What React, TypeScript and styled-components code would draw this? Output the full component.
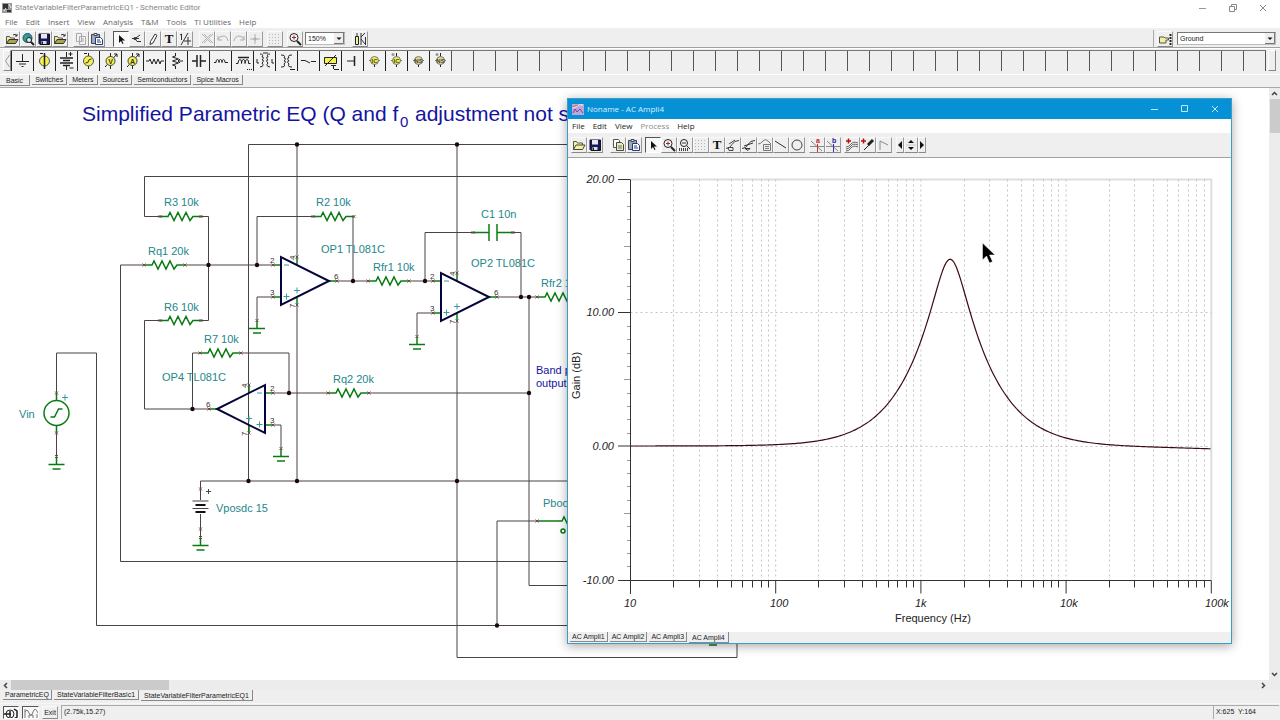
import React from "react";
import styled, { createGlobalStyle, css } from "styled-components";

const Global = createGlobalStyle`
  * { box-sizing: border-box; }
  body { margin: 0; background: #fff; font-family: "Open Sans", sans-serif; font-size: 8px; line-height: 12px; color: #222; }
  button, select { font: inherit; color: inherit; margin: 0; padding: 0; border: 0; background: none; }
  svg { display: block; flex: none; }
`;

const SMALL = `"Liberation Sans", Arial, sans-serif`;

/* ---------- shell ---------- */

const Shell = styled.div`
  display: flex;
  flex-direction: column;
  min-height: 100vh;
  background: #efefef;
`;

const TitleBar = styled.header`
  display: flex;
  align-items: center;
  height: 16px;
  padding: 0 10px 1px 2px;
  gap: 3px;
  background: #fff;
  color: #858585;
`;

const TitleText = styled.h1`
  flex: 1;
  margin: 0;
  font: 400 8px/12px Roboto, sans-serif;
  white-space: nowrap;
`;

const WindowButtons = styled.div<{ $gap: number }>`
  display: flex;
  gap: ${(p) => p.$gap}px;
`;

const WindowButton = styled.button`
  display: grid;
  place-items: center;
  width: 14px;
  height: 14px;
`;

const MenuBar = styled.nav<{ $window?: boolean }>`
  display: flex;
  align-items: center;
  height: ${(p) => (p.$window ? 14 : 12)}px;
  gap: 8px;
  padding: ${(p) => (p.$window ? "0 4px" : "0 5px")};
  background: #fff;
  color: ${(p) => (p.$window ? "#222" : "#666")};
`;

const MenuItem = styled.button`
  line-height: 12px;
  &:disabled { color: #8c8c8c; }
`;

const ToolBar = styled.div<{ $window?: boolean }>`
  display: flex;
  align-items: center;
  height: ${(p) => (p.$window ? 25 : 20)}px;
  padding: ${(p) => (p.$window ? "0 3px" : "2px 4px 0")};
  background: #efefef;
  border-bottom: 1px solid #a2a2a2;
`;

const Group = styled.div<{ $before?: number }>`
  display: flex;
  margin-left: ${(p) => p.$before ?? 0}px;
`;

const ToolButton = styled.button<{ $pressed?: boolean; $width?: number }>`
  display: grid;
  place-items: center;
  width: ${(p) => p.$width ?? 16}px;
  height: 16px;
  overflow: hidden;
  border: 1px solid;
  border-color: ${(p) => (p.$pressed ? "#555 #fff #fff #555" : "#fafafa #999 #888 #fafafa")};
  background: ${(p) => (p.$pressed ? "#f8f8f8" : "#efefef")};
`;

const Spacer = styled.div`flex: 1;`;

const Divider = styled.div`
  width: 1px;
  height: 18px;
  background: #aaa;
  margin-right: 3px;
`;

const Combo = styled.div<{ $width: number; $before: number }>`
  position: relative;
  width: ${(p) => p.$width}px;
  margin-left: ${(p) => p.$before}px;
  select {
    appearance: none;
    display: block;
    width: 100%;
    height: 13px;
    padding-left: 2px;
    border: 1px solid;
    border-color: #777 #bbb #bbb #777;
    background: #fff;
    font: 7px/11px ${SMALL};
  }
  svg {
    position: absolute;
    right: 1px;
    top: 1px;
    pointer-events: none;
  }
`;

/* ---------- component palette ---------- */

const Palette = styled.div`
  display: flex;
  height: 27px;
  padding: 1px 4px 3px 3px;
  border-top: 1px solid #fff;
  border-bottom: 1px solid #fff;
`;

const PaletteScroll = styled.button<{ $right?: boolean }>`
  display: grid;
  place-items: center;
  width: 8px;
  height: 21px;
  margin-left: ${(p) => (p.$right ? 2 : 0)}px;
  border: 1px solid;
  border-color: #fff #888 #888 #fff;
`;

const PaletteCells = styled.div`
  flex: 1;
  display: flex;
  height: 21px;
  min-width: 0;
  overflow: hidden;
  border-top: 1px solid #777;
  background: repeating-linear-gradient(to right, #555 0 1px, #efefef 1px 22px);
`;

const PaletteCell = styled.button`
  display: grid;
  place-items: center;
  flex: none;
  width: 22px;
  height: 20px;
  border-left: 1px solid #222;
  background: #f2f2f2;
`;

/* ---------- tabs ---------- */

const Tabs = styled.div<{ $height: number; $line?: boolean; $pad: number }>`
  display: flex;
  align-items: flex-start;
  gap: 2px;
  height: ${(p) => p.$height}px;
  padding-left: ${(p) => p.$pad}px;
  background: #efefef;
  border-bottom: ${(p) => (p.$line ? "1px solid #aaa" : "0")};
`;

const Tab = styled.button<{ $active?: boolean; $pad?: number }>`
  height: ${(p) => (p.$active ? 11 : 10)}px;
  padding: ${(p) => (p.$active ? 1 : 0)}px ${(p) => p.$pad ?? 2}px 0;
  border: solid #888;
  border-width: 0 1px 1px 0;
  font: 7px/9px ${SMALL};
  color: #222;
  white-space: nowrap;
`;

/* ---------- work area ---------- */

const Work = styled.div`
  flex: 1;
  display: flex;
  min-height: 592px;
`;

const Canvas = styled.main`
  position: relative;
  flex: 1;
  min-width: 0;
  overflow: hidden;
  background: #fff;
`;

const Scroll = styled.div<{ $vertical?: boolean }>`
  display: flex;
  flex-direction: ${(p) => (p.$vertical ? "column" : "row")};
  align-items: center;
  flex: none;
  background: #ececec;
  ${(p) =>
    p.$vertical
      ? css`width: 11px;`
      : css`height: 10px; padding-right: 11px;`}
`;

const ScrollButton = styled.button`
  display: grid;
  place-items: center;
  width: 11px;
  height: 11px;
`;

const Thumb = styled.div<{ $vertical?: boolean }>`
  background: #cbcbcb;
  width: ${(p) => (p.$vertical ? 10 : 158)}px;
  height: ${(p) => (p.$vertical ? 34 : 10)}px;
`;

const StatusBar = styled.footer`
  display: flex;
  align-items: center;
  height: 17px;
  padding: 0 1px 0 3px;
  font: 7px/12px ${SMALL};
  border-top: 1px solid #f6f6f6;
`;

const StatusButton = styled(ToolButton)`
  height: 13px;
  margin-right: 3px;
`;

const StatusCell = styled.div<{ $grow?: boolean }>`
  flex: ${(p) => (p.$grow ? "1" : "none")};
  width: ${(p) => (p.$grow ? "auto" : "66px")};
  height: 14px;
  padding-left: 2px;
  white-space: pre;
  border: solid #aaa;
  border-width: 1px 0 0 1px;
`;

/* ---------- analysis window ---------- */

const ChartWindow = styled.section`
  position: absolute;
  left: 567px;
  top: 10px;
  width: 665px;
  border: 1px solid #3b9cc4;
  background: #fff;
  box-shadow: 0 2px 10px rgba(0, 0, 0, 0.35);
`;

const ChartTitle = styled.div`
  display: flex;
  align-items: center;
  gap: 3px;
  height: 20px;
  padding: 0 9px 0 4px;
  background: #0690d6;
  color: #d5f2ff;
  h2 { flex: 1; margin: 0; font-size: 8px; font-weight: 400; }
`;

/* ---------- icons, drawn on a 14px grid ---------- */

const Icon = ({ children, w = 14, h = 14 }: { children: React.ReactNode; w?: number; h?: number }) => (
  <svg width={w} height={h} viewBox={`0 0 ${w} ${h}`} fill="none" stroke="#222" strokeWidth="1" aria-hidden="true">
    {children}
  </svg>
);

const Glyph = styled.text<{ $size: number; $serif?: boolean }>`
  font: 700 ${(p) => p.$size}px ${(p) => (p.$serif ? `"Liberation Serif", serif` : SMALL)};
  stroke: none;
`;

const icons: Record<string, React.ReactNode> = {
  open: (<Icon><path d="M1.5 11.5v-7h3l1 1.5h4v2" stroke="#555" fill="#f0ec90" /><path d="M1.5 11.5l2.5-4h9l-2.5 4z" fill="#a9a648" stroke="#333" /><path d="M8 3q2-2 4 1M12 2v2h-2" stroke="#333" /></Icon>),
  openLight: (<Icon><path d="M1.5 11.5v-8h3l1 1.5h5v2" stroke="#555" fill="#f5f29a" /><path d="M1.5 11.5l2.5-4.5h9l-2.5 4.5z" fill="#f5f29a" stroke="#444" /></Icon>),
  globe: (<Icon><circle cx="6.5" cy="6" r="4.5" fill="#2b8fb8" stroke="#17566e" /><path d="M3 4q2-2 3 0t2 1-1 3-3-1z" fill="#42a55a" stroke="none" /><path d="M9 9l4 4" strokeWidth="2" /><circle cx="8" cy="8" r="2.5" fill="#d6f1f5" /></Icon>),
  save: (<Icon><path d="M2 2h10.500v10.500H3L2 11.500z" fill="#18185e" stroke="#111" /><path d="M4 2h6v4.500H4z" fill="#e8e8f4" stroke="none" /><path d="M4.500 9h5v3h-5z" fill="#ddd" stroke="none" /><path d="M5.500 9.500v2.500" /></Icon>),
  copyOff: (<Icon><path d="M2.500 1.500h5v8h-5zM5.500 4.500h6v8h-6z" fill="#f3f3f3" stroke="#aaa" /><path d="M7 7h3M7 9h3" stroke="#aaa" /></Icon>),
  copy: (<Icon><path d="M2.500 1.500h5l1 1v7h-6z" fill="#fff" stroke="#555" /><path d="M5.500 4.500h5l2 2v6h-7z" fill="#e9efb5" stroke="#444" /><path d="M7 8h4M7 10h4" stroke="#667" /></Icon>),
  paste: (<Icon><path d="M1.500 2.500h8v9h-8z" fill="#9ab" stroke="#445" /><path d="M4 1.500h3v2H4z" fill="#eee" stroke="#445" /><path d="M5.500 5.500h5l2 2v5h-7z" fill="#fff" stroke="#223a7c" /><path d="M7 8h3M7 10h4" stroke="#223a7c" /></Icon>),
  pointer: (<Icon><path d="M5 3v8l2-2 1.500 3 1-.5L8 8.500h3z" fill="#111" stroke="none" /></Icon>),
  wire: (<Icon><path d="M10 3L5 6.500M5 6.500H2M5 6.500l2 3h4M5 6.500h4" stroke="#333" /><circle cx="5" cy="6.500" r="1.500" fill="#333" stroke="none" /></Icon>),
  pencil: (<Icon><path d="M9 2l2 1.500-4 7.500-3 1.500.5-3z" fill="#fff" stroke="#333" /></Icon>),
  text: (<Icon><Glyph $size={13} $serif x="7" y="11" textAnchor="middle" fill="#111">T</Glyph></Icon>),
  half: (<Icon><path d="M2 3l1.500-1v6M10 1L3 13M10 5v4M6 9h7M10 9v4" stroke="#333" /></Icon>),
  cross: (<Icon><path d="M2 2l9 9M4 2l9 9M11 2l-9 9M13 2l-9 9" stroke="#b5b5b5" /></Icon>),
  undo: (<Icon><path d="M2 8q1-4 5-4t5 5M2 4v4h4" stroke="#b0b0b0" /></Icon>),
  redo: (<Icon><path d="M12 8q-1-4-5-4t-5 5M12 4v4H8" stroke="#b0b0b0" /></Icon>),
  plus: (<Icon><path d="M7 2v10M2 7h10" stroke="#b0b0b0" /><path d="M5 7l2-2 2 2-2 2z" fill="#b0b0b0" stroke="none" /></Icon>),
  grid: (<Icon><path d="M1 2.500h12M1 5.500h12M1 8.500h12M1 11.500h12" stroke="#b8b8b8" strokeDasharray="1 2" /></Icon>),
  zoom: (<Icon><circle cx="6" cy="5.500" r="4" fill="#f6f6f6" /><path d="M9 9l4 4" strokeWidth="2" /><path d="M4 5.500h4M6 3.500v4" stroke="#a22" /></Icon>),
  zoom100: (<Icon><circle cx="6" cy="5" r="3.500" fill="#f6f6f6" /><path d="M4 5h4M9 8l3 3" stroke="#333" /><path d="M1 11.500h10" stroke="#444" strokeWidth="3" strokeDasharray="1 1" /></Icon>),
  probe: (<Icon><path d="M2.500 4.500h3v8h-3z" fill="#f3f0a0" /><path d="M4 1v3M8 1v12M8 5l4-4M8 7l4 5M12.500 5v8" stroke="#333" /></Icon>),
  hand: (<Icon><path d="M1.500 5h4l2 1h3v2H8v3H1.500z" fill="#eef0a8" stroke="#554" /><path d="M12.500 2v11" strokeDasharray="2 1" strokeWidth="2" /></Icon>),
  curveA: (<Icon><path d="M0 10.500q4 0 6-4t7-4M3 6l6-4M2 9.500h5v3H3z" stroke="#444" /></Icon>),
  curveB: (<Icon><path d="M0 10.500q4 0 6-4t7-4M2 8l9-3M3 10.500h5l-2 2z" stroke="#333" /></Icon>),
  legend: (<Icon><path d="M0 6q3 0 5-3t5 0l3 3M5.500 6.500h7v6h-7zM7 8.500h4M7 10.500h4" stroke="#777" /></Icon>),
  line: (<Icon><path d="M1 3l11 7" stroke="#333" /></Icon>),
  circle: (<Icon><circle cx="7" cy="7" r="5" stroke="#444" /></Icon>),
  cursorA: (<Icon><path d="M0 8.500h14M1 3l11 10" stroke="#888" /><path d="M7.500 6v8" stroke="#c33" /><Glyph $size={7} x="6" y="5" fill="#c22">a</Glyph></Icon>),
  cursorB: (<Icon><path d="M0 8.500h14M1 3l11 10" stroke="#888" /><path d="M7.500 6v8" stroke="#33a" /><Glyph $size={7} x="6" y="5" fill="#22a">b</Glyph></Icon>),
  addCurve: (<Icon><path d="M1 9q3 0 5-3t7-1M1 11q3 0 5-3t7-1M1 13q3 0 5-3t7-1" stroke="#666" /><path d="M1 3h5M3.500 .5v5" stroke="#b11" strokeWidth="1.500" /></Icon>),
  addProbe: (<Icon><path d="M3 12l5-5" stroke="#222" /><path d="M7 7l5-5" stroke="#222" strokeWidth="3" /><path d="M0 3h5M2.500 .5v5" stroke="#b11" strokeWidth="1.500" /></Icon>),
  angle: (<Icon><path d="M3 12V3l8 4" stroke="#888" /></Icon>),
  left: (<Icon w={6} h={10}><path d="M5 1v8L1 5z" fill="#111" stroke="none" /></Icon>),
  right: (<Icon w={6} h={10}><path d="M1 1v8l4-4z" fill="#111" stroke="none" /></Icon>),
  updown: (<Icon w={10} h={14}><path d="M2 5l3-3 3 3zM2 9l3 3 3-3z" fill="#111" stroke="none" /><path d="M0 7h10" stroke="#ccc" /></Icon>),
};

const YELLOW = "#f5f14c";

const Bulb = ({ label, star, pale }: { label: string; star?: boolean; pale?: boolean }) => (
  <>
    <path d={star ? "M9.500 2v14" : "M9.500 10v6"} />
    <circle cx="9.500" cy="9.500" r="4" fill={pale ? "#dcd98a" : "#eff04a"} stroke="#777" />
    <path d="M4 9.500h2M13 9.500h2" stroke="#777" />
    <Glyph $size={6} x="9.500" y="12" textAnchor="middle" fill="#444">{label}</Glyph>
    {star && <circle cx="6" cy="3.500" r="1.500" fill="#999" stroke="none" />}
  </>
);

const Meter = ({ label }: { label: string }) => (
  <>
    <path d="M9.500 2v16M4 16L16 3M13 3h3v3" />
    <circle cx="9.500" cy="10" r="4.500" fill={YELLOW} stroke="#444" />
    <Glyph $size={7} x="9.500" y="12.500" textAnchor="middle" fill="#333">{label}</Glyph>
  </>
);

const parts: [string, React.ReactNode][] = [
  ["Ground", <path d="M9.500 3v7M3 10.500h13M6 13h7M8.500 15.500h2" />],
  ["Voltage source", <><circle cx="9.500" cy="10" r="5" fill={YELLOW} stroke="#555" /><path d="M9.500 2v16" strokeWidth="1.500" /><path d="M5 2.500h3" /></>],
  ["Battery", <><path d="M9.500 1v5M9.500 15v4M13.500 1v4M11.500 3h4M12.500 17h4" /><path d="M3 7h13M6 9.500h7M3 12h13M6 14.500h7" strokeWidth="1.500" /></>],
  ["Generator", <><path d="M9.500 2v16M5 2.500h3" /><circle cx="9.500" cy="10" r="5" fill={YELLOW} stroke="#555" /><path d="M6.500 12q3 0 3-2t3-2" /></>],
  ["Voltmeter", <Meter label="V" />],
  ["Ammeter", <Meter label="A" />],
  ["Resistor", <path d="M1 10h3l1-2 2 5 2-5 2 5 2-5 2 5 1-3h3" />],
  ["Potentiometer", <path d="M8.500 2v3l-3 1 6 2-6 2 6 2-6 2 3 1v3M16 10h-5M13 8l-2 2 2 2" />],
  ["Capacitor", <path d="M3 10h5M12 10h5M8 4v12M11.500 4v12" strokeWidth="1.500" />],
  ["Inductor", <path d="M3 11.500h2q0-3 1.500-3t1.500 3q0-3 1.500-3t1.500 3q0-3 1.500-3t1.500 3h3" />],
  ["Core inductor", <><path d="M3 12.500h2q0-4 2-4t1.500 4q0-4 2-4t1.500 4q0-4 2-4t1.500 4h2" /><path d="M5 6.500h11" strokeWidth="1.500" /><path d="M14 18.500h5" strokeDasharray="1 1" /></>],
  ["Coupled inductors", <path d="M5 3q4 0 2 3 3 0 0 3 3 0 0 3 3 3-2 4M15 3q-4 0-2 3-3 0 0 3-3 0 0 3-3 3 2 4M2 8v4h2M17 8v4h2M8 2h5" />],
  ["Transformer", <path d="M4 4q5 0 3 3 3 0 0 3 3 0 0 3 2 3-3 3M15 4q-5 0-3 3-3 0 0 3-3 0 0 3-2 3 3 3M13 18.500h5" />],
  ["Switch", <path d="M2 9.500h4l5 2.500M12 10.500h5" />],
  ["Relay", <><path d="M3.500 6.500h12v6h-12z" fill={YELLOW} /><path d="M4 15L15 4M12.500 14v4M10 14.500h5M13 18.500h5" /></>],
  ["Terminal", <><path d="M4 10h7" /><path d="M11.500 5v10" strokeWidth="1.500" /></>],
  ["Initial condition", <Bulb label="IC" />],
  ["Initial condition, differential", <Bulb label="IC" star />],
  ["Nodeset", <Bulb label="NS" pale />],
  ["Nodeset, differential", <Bulb label="NS" star pale />],
];

const Arrow = ({ d }: { d: string }) => (
  <svg width="7" height="7" viewBox="0 0 7 7" fill="none" stroke="#444" strokeWidth="1.500" aria-hidden="true"><path d={d} /></svg>
);

const Select = ({ label, options, width, before }: { label: string; options: string[]; width: number; before: number }) => (
  <Combo $width={width} $before={before}>
    <select aria-label={label}>{options.map((o) => <option key={o}>{o}</option>)}</select>
    <svg width="10" height="11" viewBox="0 0 10 11" aria-hidden="true">
      <path d="M0 0h10v11H0z" fill="#eee" />
      <path d="M9.500 0v10.500H0" fill="none" stroke="#777" />
      <path d="M2.500 4.500h5L5 7z" fill="#111" />
    </svg>
  </Combo>
);

const Buttons = ({ names, before, pressed }: { names: [string, string][]; before?: number; pressed?: string }) => (
  <Group $before={before}>
    {names.map(([icon, label]) => (
      <ToolButton key={label} aria-label={label} $pressed={icon === pressed}>{icons[icon]}</ToolButton>
    ))}
  </Group>
);

/* ---------- schematic ---------- */

const SchematicSvg = styled.svg`
  font-family: ${SMALL};
  font-size: 11px;
  .wire { stroke: #4a4245; stroke-width: 1; fill: none; }
  .part { stroke: #0b7a14; stroke-width: 1.5; fill: none; }
  .amp { stroke: #04043c; stroke-width: 2; fill: none; }
  .sign { stroke: #3a9a9a; stroke-width: 1; fill: none; }
  .name { fill: #24878a; }
  .note { fill: #1414a0; }
  .heading { font-size: 21px; }
  .sub { font-size: 15px; }
  .pin { fill: #333; font-size: 8px; }
  .end { stroke: #7a4a40; stroke-width: 1; fill: none; }
`;

const End = ({ x, y }: { x: number; y: number }) => (
  <path className="end" d={`M${x - 1.5} ${y - 1.5}l3 3m0 -3l-3 3`} />
);

const Resistor = ({ x, y }: { x: number; y: number }) => (
  <g>
    <path className="part" d={`M${x} ${y}h8l2 -4 4 8 4 -8 4 8 4 -8 4 8 3 -4h8`} />
    <End x={x} y={y} />
    <End x={x + 41} y={y} />
  </g>
);

const Ground = ({ x, y }: { x: number; y: number }) => (
  <g>
    <path className="part" d={`M${x} ${y - 8}v8M${x - 8} ${y}h16M${x - 4} ${y + 4.5}h8`} />
    <End x={x} y={y - 8} />
  </g>
);

const OpAmp = ({ x, y, flip }: { x: number; y: number; flip?: boolean }) => {
  const s = flip ? -1 : 1;
  const px = x + 16 * s;
  return (
    <g>
      <path className="part" d={`M${x} ${y - 16}h${-8 * s}M${x} ${y + 16}h${-8 * s}M${x + 48 * s} ${y}h${8 * s}M${px} ${y - 16}v-8M${px} ${y + 16}v8`} />
      <path className="amp" d={`M${x} ${y - 24}v48l${48 * s} -24z`} />
      <path className="sign" d={`M${x + 3 * s} ${y - 16}h${5 * s}M${x + 2.5 * s} ${y + 15.5}h${6 * s}M${x + 5.5 * s} ${y + 12.5}v6M${px - 3} ${y + 9.5}h6M${px} ${y + 6.5}v6`} />
      <End x={x - 8 * s} y={y - 16} />
      <End x={x - 8 * s} y={y + 16} />
      <End x={x + 56 * s} y={y} />
      <End x={px} y={y - 24} />
      <End x={px} y={y + 24} />
      <text className="pin" x={flip ? x + 5 : x - 11} y={y - 18}>2</text>
      <text className="pin" x={flip ? x + 5 : x - 11} y={y + 14}>3</text>
      <text className="pin" x={flip ? x - 59 : x + 53} y={y - 2}>6</text>
      <text className="pin" transform={`translate(${px - 2} ${y - 21}) rotate(-90)`}>4</text>
      <text className="pin" transform={`translate(${px - 2} ${y + 27}) rotate(-90)`}>7</text>
    </g>
  );
};

const wires = [
  "M248.500 481V144.500H740",
  "M160 216.500H144.500V176.500H740",
  "M201 216.500H208.500V320.500H201",
  "M144 265H120.500V561.500H740",
  "M185 265H272",
  "M160 320.500H144.500V409H208",
  "M313 216.500H257V265M353 216.500V281",
  "M297 144V257M297 305V481",
  "M457 144V273M457 321V657.500H737V640",
  "M337 281H369M409 281H432",
  "M272 297H257V320M432 313H417V336",
  "M473 232.500H425V281M513 232.500H521V297",
  "M497 297H537M529 297V585.500H740",
  "M200 353H192.500V409M241 353H289V393",
  "M273 393H329M369 393H529",
  "M273 425H281V448",
  "M56.500 393V353H96.500V625.500H740",
  "M56.500 433V457",
  "M740 481H200.500V500M200.500 514V537",
  "M537 521H497V626",
];

const nodes = [
  [208.5, 265], [257, 265], [297, 144.5], [457, 144.5], [353, 281], [425, 281], [521, 297], [529, 297],
  [529, 393], [457, 481], [297, 481], [248.5, 481], [192.5, 409], [289, 393], [497, 625.5],
];

const names: [number, number, string][] = [
  [164, 206, "R3 10k"], [148, 255, "Rq1 20k"], [164, 311, "R6 10k"], [316, 206, "R2 10k"],
  [321, 253, "OP1 TL081C"], [373, 271, "Rfr1 10k"], [481, 218, "C1 10n"], [471, 267, "OP2 TL081C"],
  [541, 287, "Rfr2 1"], [204, 343, "R7 10k"], [162, 381, "OP4 TL081C"], [333, 383, "Rq2 20k"],
  [19, 418, "Vin"], [216, 512, "Vposdc 15"], [543, 507, "Pboo"],
];

const Schematic = () => (
  <SchematicSvg width="740" height="592" viewBox="0 88 740 592" role="img" aria-label="Parametric EQ schematic">
    <text className="note heading" x="82" y="121">Simplified Parametric EQ (Q and f</text>
    <text className="note sub" x="400" y="127">0</text>
    <text className="note heading" x="415" y="121">adjustment not s</text>
    {wires.map((d) => <path key={d} className="wire" d={d} />)}
    {[[160, 216.5], [144, 265], [160, 320.5], [313, 216.5], [368, 281], [537, 297], [200, 353], [328, 393]].map(([x, y]) => (
      <Resistor key={`${x}-${y}`} x={x} y={y} />
    ))}
    {[[257, 328.5], [417, 344.5], [281, 456.5], [56.5, 464.5], [200.5, 545.5], [713, 640.5]].map(([x, y]) => (
      <Ground key={`${x}-${y}`} x={x} y={y} />
    ))}
    <OpAmp x={281} y={281} />
    <OpAmp x={441} y={297} />
    <OpAmp x={265} y={409} flip />
    <path className="part" d="M473 232.500H489M489 224V241M497 224V241M497 232.500H513" />
    <End x={473} y={232.5} />
    <End x={513} y={232.5} />
    <path className="part" d="M537 521H562l2 -4 4 8M56.500 393V401M56.500 425V433M50.500 417h4l4 -8h4" />
    <circle className="part" cx="56.500" cy="413" r="12.500" />
    <circle className="part" cx="563" cy="531" r="2" />
    <End x={537} y={521} />
    <End x={56.5} y={393} />
    <End x={56.5} y={433} />
    <End x={200.5} y={489} />
    <End x={200.5} y={529} />
    <path className="sign" d="M62 397.500h6M65 394.500v6" />
    <path className="wire" d="M192.500 501h16M192.500 508.500h16M206 491.500h5M208.500 489v5" />
    <path d="M195.500 505h10M195.500 512h10" stroke="#111" strokeWidth="2" />
    {nodes.map(([x, y]) => <circle key={`${x}-${y}`} cx={x} cy={y} r="2.200" fill="#1c080c" />)}
    {names.map(([x, y, t]) => <text key={t} className="name" x={x} y={y}>{t}</text>)}
    <text className="note" x="536" y="374">Band p</text>
    <text className="note" x="536" y="387">output</text>
  </SchematicSvg>
);

/* ---------- gain plot ---------- */

const X0 = 630.5;
const DECADE = 145.2;
const ZERO = 446;
const PER_DB = 13.36;
const BOTTOM = 580.5;
const TOP = 179.5;
const RIGHT = X0 + 4 * DECADE;

const gainDb = (f: number) => {
  const u = f / 1590 - 1590 / f;
  const width = 0.25;
  const boost = 25.1;
  return 10 * Math.log10((u * u + width * boost) / (u * u + width)) - 0.22 * Math.pow(f / 100000, 0.7);
};

const curve = Array.from({ length: 291 }, (_, i) => {
  const x = X0 + i * 2;
  const f = 10 * Math.pow(10, (i * 2) / DECADE);
  return `${i ? "L" : "M"}${x} ${(ZERO - gainDb(f) * PER_DB).toFixed(2)}`;
}).join("");

const minorX = [0, 1, 2, 3].flatMap((d) =>
  [2, 3, 4, 5, 6, 7, 8, 9].map((m) => Math.round(X0 + DECADE * (d + Math.log10(m))) - 0.5),
);
const majorX = [0, 1, 2, 3, 4].map((d) => X0 + DECADE * d);

const minorY = Array.from({ length: 29 }, (_, i) => i + 1)
  .filter((i) => i % 10 !== 0)
  .map((i) => {
    const length = i % 5 === 0 ? 6 : 3;
    return `M${630 - length} ${Math.floor(TOP + i * PER_DB) + 0.5}h${length}`;
  })
  .join("");

const PlotSvg = styled.svg`
  font-family: ${SMALL};
  font-size: 11px;
  fill: #222;
  .axis { stroke: #333; fill: none; }
  .fine { stroke: #999; fill: none; }
  .frame { stroke: #dedede; stroke-width: 2; fill: none; }
  .grid { stroke: #c4c4c4; stroke-dasharray: 2 3; fill: none; }
  .scale { font-style: italic; }
`;

const Plot = () => (
  <PlotSvg width="663" height="474" viewBox="568 158 663 474" role="img" aria-label="Gain against frequency">
    <path className="frame" d={`M${X0} ${TOP}H${RIGHT}V${BOTTOM}`} />
    <path className="grid" d={[...minorX, ...majorX.slice(1, 4)].map((x) => `M${x} ${TOP}V${BOTTOM}`).join("") + `M${X0} 312.500H${RIGHT}M${X0} 446.500H${RIGHT}`} />
    <path className="fine" d={minorY} />
    <path className="axis" d={`M${X0} ${TOP}V594M618 ${BOTTOM}H${RIGHT}M618 179.500h12M618 312.500h12M618 446h12`} />
    <path className="axis" d={minorX.map((x) => `M${x} ${BOTTOM}v7`).join("") + majorX.map((x) => `M${x} ${BOTTOM}v13`).join("")} />
    <path d={curve} fill="none" stroke="#3a0d12" strokeWidth="1.200" />
    <g className="scale" textAnchor="end">
      <text x="614" y="183">20.00</text>
      <text x="614" y="316">10.00</text>
      <text x="614" y="450">0.00</text>
      <text x="614" y="584">-10.00</text>
    </g>
    <g className="scale">
      <text x="624" y="607">10</text>
      <text x="770" y="607">100</text>
      <text x="915" y="607">1k</text>
      <text x="1060" y="607">10k</text>
      <text x="1205" y="607">100k</text>
    </g>
    <text x="895" y="622">Frequency (Hz)</text>
    <text transform="translate(580 399) rotate(-90)">Gain (dB)</text>
    <path d="M982.500 243v17l4-4 3 7 3-1.500-3-6.500h5.500z" fill="#000" stroke="#fff" strokeWidth="0.500" />
  </PlotSvg>
);

/* ---------- page ---------- */

export default function App() {
  return (
    <Shell>
      <Global />
      <TitleBar>
        <svg width="10" height="12" viewBox="0 0 10 12" aria-hidden="true">
          <path d="M0 1h10v10H0z" fill="#999" />
          <path d="M1 2h5v5H1zM5 8h4v2H5z" fill="#333" />
          <path d="M7 2l2 4M2 9l2-3" stroke="#eee" />
        </svg>
        <TitleText>StateVariableFilterParametricEQ1 - Schematic Editor</TitleText>
        <WindowButtons $gap={16}>
          <WindowButton aria-label="Minimize"><svg width="8" height="8" viewBox="0 0 8 8"><path d="M0 4.500h7" stroke="#999" /></svg></WindowButton>
          <WindowButton aria-label="Restore"><svg width="8" height="8" viewBox="0 0 8 8" fill="none" stroke="#888"><path d="M.5 2.500h5v5h-5zM2.500 2V.5h5v5H6" /></svg></WindowButton>
          <WindowButton aria-label="Close"><svg width="8" height="8" viewBox="0 0 8 8" stroke="#888"><path d="M1 1l6 6M7 1L1 7" /></svg></WindowButton>
        </WindowButtons>
      </TitleBar>
      <MenuBar>
        {["File", "Edit", "Insert", "View", "Analysis", "T&M", "Tools", "TI Utilities", "Help"].map((m) => <MenuItem key={m}>{m}</MenuItem>)}
      </MenuBar>
      <ToolBar>
        <Buttons names={[["open", "Open"], ["globe", "Open from web"], ["save", "Save"], ["open", "Close file"]]} />
        <Buttons before={5} names={[["copyOff", "Copy"], ["paste", "Paste"]]} />
        <Buttons before={8} pressed="pointer" names={[["pointer", "Select"], ["wire", "Last component"], ["pencil", "Wire"], ["text", "Text"], ["half", "Hide values"]]} />
        <Buttons before={6} names={[["cross", "Delete"], ["undo", "Undo"], ["redo", "Redo"], ["plus", "Mirror"]]} />
        <Buttons before={4} names={[["grid", "Grid"]]} />
        <Buttons before={4} names={[["zoom", "Zoom"]]} />
        <Select label="Zoom level" options={["150%", "100%", "200%"]} width={40} before={2} />
        <Buttons before={7} names={[["probe", "Interactive mode"]]} />
        <Spacer />
        <Divider />
        <Buttons names={[["hand", "Find component"]]} />
        <Select label="Component" options={["Ground", "Resistor", "Capacitor"]} width={99} before={4} />
      </ToolBar>
      <Palette>
        <PaletteScroll aria-label="Scroll left"><svg width="5" height="12" viewBox="0 0 5 12"><path d="M4.500 0L.5 6l4 6" fill="none" stroke="#999" /></svg></PaletteScroll>
        <PaletteCells>
          {parts.map(([label, art]) => (
            <PaletteCell key={label} aria-label={label}><Icon w={20} h={20}>{art}</Icon></PaletteCell>
          ))}
        </PaletteCells>
        <PaletteScroll aria-label="Scroll right" $right />
      </Palette>
      <Tabs $height={13} $line $pad={0}>
        <Tab $active $pad={6}>Basic</Tab>
        {["Switches", "Meters", "Sources", "Semiconductors", "Spice Macros"].map((t) => <Tab key={t} $pad={3}>{t}</Tab>)}
      </Tabs>
      <Work>
        <Canvas>
          <Schematic />
          <ChartWindow>
            <ChartTitle>
              <svg width="12" height="12" viewBox="0 0 12 12" aria-hidden="true">
                <path d="M0 1h12v11H0z" fill="#b9a9d6" />
                <path d="M0 5q3 0 5-2t6-1" stroke="#eee" fill="none" />
                <path d="M1 10l2-4 2 3 3-3 3 4" stroke="#8a3aa8" fill="none" />
                <path d="M0 4l6-2" stroke="#d66" />
              </svg>
              <h2>Noname - AC Ampli4</h2>
              <WindowButtons $gap={16}>
                <WindowButton aria-label="Minimize chart"><svg width="8" height="8" viewBox="0 0 8 8"><path d="M0 4.500h7" stroke="#bdeaff" /></svg></WindowButton>
                <WindowButton aria-label="Maximize chart"><svg width="8" height="8" viewBox="0 0 8 8"><path d="M.5 .5h6v6h-6z" fill="none" stroke="#bdeaff" /></svg></WindowButton>
                <WindowButton aria-label="Close chart"><svg width="8" height="8" viewBox="0 0 8 8"><path d="M1 1l6 6M7 1L1 7" stroke="#bdeaff" /></svg></WindowButton>
              </WindowButtons>
            </ChartTitle>
            <MenuBar $window>
              <MenuItem>File</MenuItem>
              <MenuItem>Edit</MenuItem>
              <MenuItem>View</MenuItem>
              <MenuItem disabled>Process</MenuItem>
              <MenuItem>Help</MenuItem>
            </MenuBar>
            <ToolBar $window>
              <Buttons names={[["openLight", "Open curve"], ["save", "Save curve"]]} />
              <Buttons before={7} names={[["copy", "Copy curve"], ["paste", "Paste curve"]]} />
              <Buttons before={3} pressed="pointer" names={[["pointer", "Pointer"], ["zoom", "Zoom in"], ["zoom100", "Zoom 100%"], ["grid", "Show grid"], ["text", "Add text"], ["curveA", "Arrow"], ["curveB", "Auto label"], ["legend", "Legend"], ["line", "Line"], ["circle", "Ellipse"]]} />
              <Buttons before={4} names={[["cursorA", "Cursor a"], ["cursorB", "Cursor b"]]} />
              <Buttons before={3} names={[["addCurve", "Add more curves"], ["addProbe", "Post-processor"], ["angle", "Axis"]]} />
              <Group $before={4}>
                <ToolButton $width={8} aria-label="Previous page">{icons.left}</ToolButton>
                <ToolButton $width={14} aria-label="Change page">{icons.updown}</ToolButton>
                <ToolButton $width={8} aria-label="Next page">{icons.right}</ToolButton>
              </Group>
            </ToolBar>
            <Plot />
            <Tabs $height={11} $pad={2}>
              <Tab>AC Ampli1</Tab>
              <Tab>AC Ampli2</Tab>
              <Tab>AC Ampli3</Tab>
              <Tab $active $pad={3}>AC Ampli4</Tab>
            </Tabs>
          </ChartWindow>
        </Canvas>
        <Scroll $vertical>
          <ScrollButton aria-label="Scroll up"><Arrow d="M1 5l2.500-2.500L6 5" /></ScrollButton>
          <Thumb $vertical />
          <Spacer />
          <ScrollButton aria-label="Scroll down"><Arrow d="M1 2l2.500 2.500L6 2" /></ScrollButton>
        </Scroll>
      </Work>
      <Scroll>
        <ScrollButton aria-label="Scroll sheet left"><Arrow d="M5 1L2.500 3.500 5 6" /></ScrollButton>
        <Thumb />
        <Spacer />
        <ScrollButton aria-label="Scroll sheet right"><Arrow d="M2 1l2.500 2.500L2 6" /></ScrollButton>
      </Scroll>
      <Tabs $height={13} $pad={3}>
        <Tab>ParametricEQ</Tab>
        <Tab $pad={3}>StateVariableFilterBasic1</Tab>
        <Tab $active $pad={3}>StateVariableFilterParametricEQ1</Tab>
      </Tabs>
      <StatusBar>
        <StatusButton $pressed aria-label="Schematic view"><Icon><circle cx="6" cy="7" r="4" /><path d="M0 7h7M6 4v6M10 2l3 2v6l-3 2" strokeWidth="1.500" /></Icon></StatusButton>
        <StatusButton $pressed $width={17} aria-label="Diagram view"><Icon><path d="M1 12V2M1 5q2-4 4 1t4-1 5 1M1 11.500h4V8h4v3.500h4V7" stroke="#777" /></Icon></StatusButton>
        <StatusButton>Exit</StatusButton>
        <StatusCell $grow>(2.75k,15.27)</StatusCell>
        <StatusCell>X:625  Y:164</StatusCell>
      </StatusBar>
    </Shell>
  );
}
